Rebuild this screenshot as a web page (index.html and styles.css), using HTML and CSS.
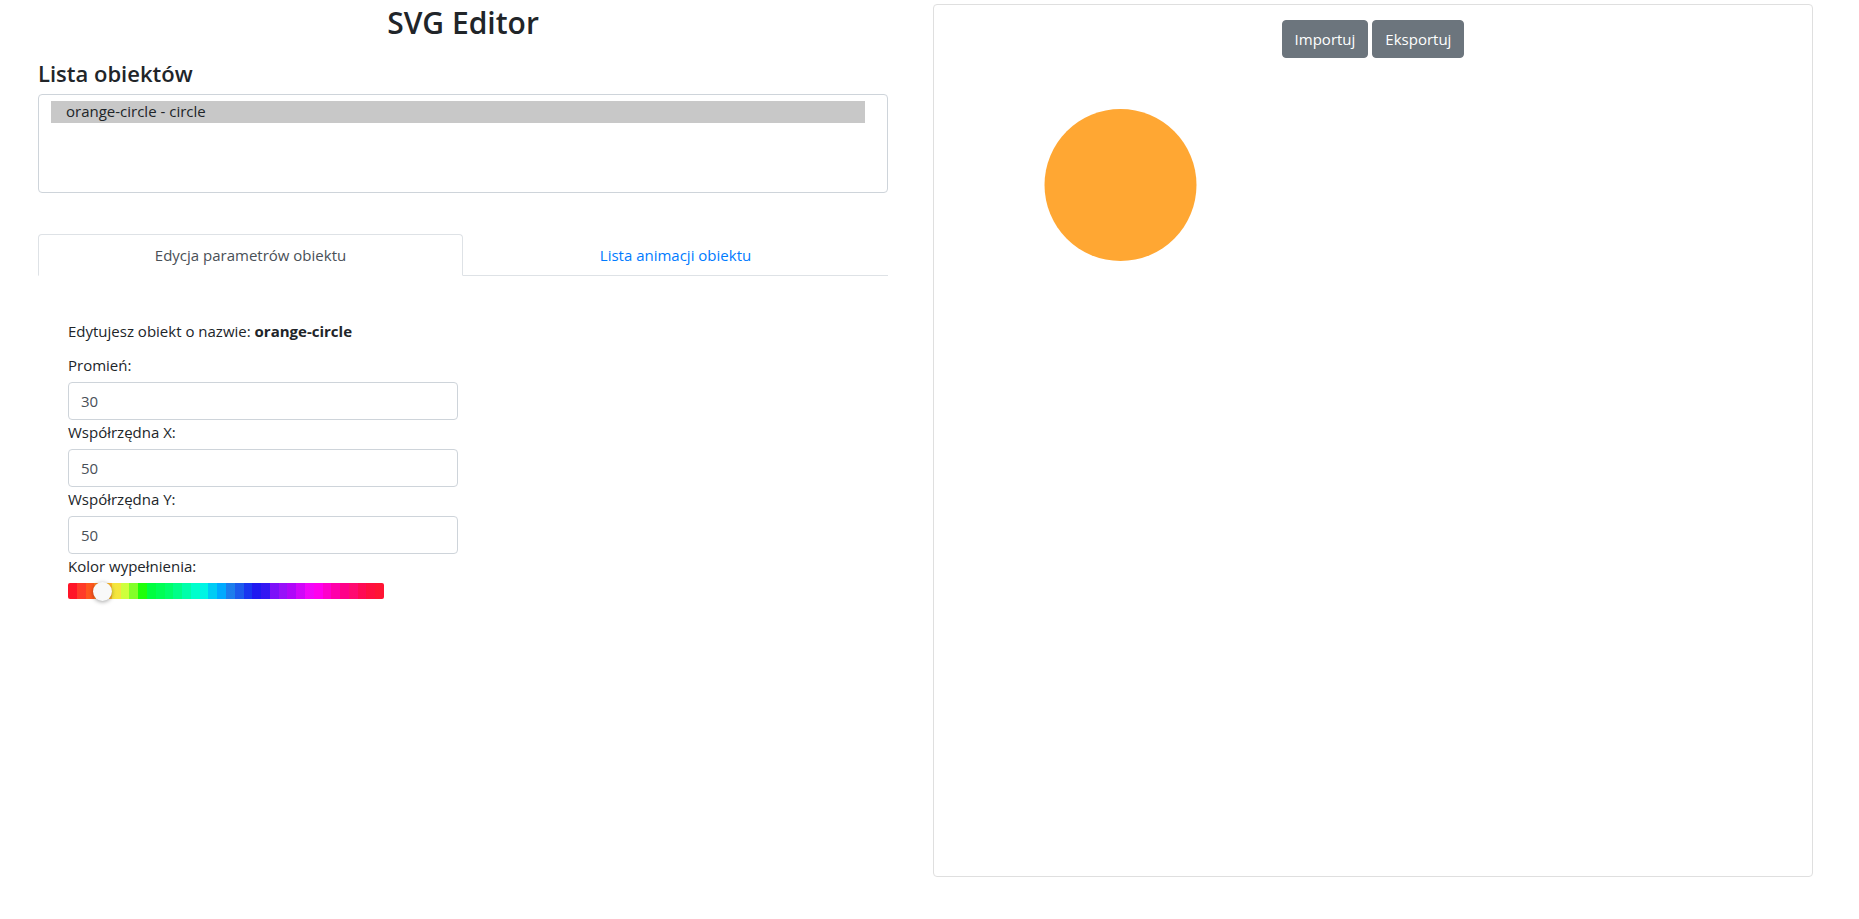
FILE: index.html
```html
<!DOCTYPE html>
<html lang="pl">
<head>
<meta charset="utf-8">
<title>SVG Editor</title>
<link rel="stylesheet" href="styles.css">
</head>
<body>
<div class="page">
  <main class="editor">
    <h1 class="title">SVG Editor</h1>
    <h2 class="section-title">Lista obiektów</h2>
    <div class="object-list" role="listbox">
      <div class="object-option selected" role="option">orange-circle - circle</div>
    </div>
    <nav class="tabs">
      <div class="tab active">Edycja parametrów obiektu</div>
      <div class="tab">Lista animacji obiektu</div>
    </nav>
    <div class="tab-pane">
      <p class="info">Edytujesz obiekt o nazwie: <strong>orange-circle</strong></p>
      <label class="field-label" for="r">Promień:</label>
      <input class="field" id="r" type="text" value="30">
      <label class="field-label" for="x">Współrzędna X:</label>
      <input class="field" id="x" type="text" value="50">
      <label class="field-label" for="y">Współrzędna Y:</label>
      <input class="field" id="y" type="text" value="50">
      <label class="field-label">Kolor wypełnienia:</label>
      <div class="hue-slider"><span class="hue-thumb"></span></div>
    </div>
  </main>
  <section class="canvas-card">
    <div class="toolbar">
      <button class="btn" type="button">Importuj</button>
      <button class="btn" type="button">Eksportuj</button>
    </div>
    <svg class="canvas" xmlns="http://www.w3.org/2000/svg">
      <circle cx="186.5" cy="127" r="76" fill="#ffa733"/>
    </svg>
  </section>
</div>
</body>
</html>
```

FILE: styles.css
```css
html, body {
  margin: 0;
  padding: 0;
  background: #fff;
}

body {
  font-family: "Open Sans", "Noto Sans", sans-serif;
  font-size: 15px;
  line-height: 1.5;
  color: #212529;
}

.page {
  display: flex;
  align-items: flex-start;
}

.editor {
  flex: none;
  width: 850px;
  margin-left: 38px;
}

.title {
  margin: 4px 0 0;
  font-size: 30px;
  font-weight: 600;
  line-height: 38.4px;
  text-align: center;
}

.section-title {
  margin: 17px 0 6px;
  font-size: 22px;
  font-weight: 600;
  line-height: 28.8px;
}

.object-list {
  box-sizing: border-box;
  height: 99px;
  padding: 6px 22px 0 12px;
  border: 1px solid #ced4da;
  border-radius: 4px;
}

.object-option {
  box-sizing: border-box;
  height: 22px;
  padding-left: 15px;
  line-height: 20px;
  color: #212529;
}

.object-option.selected {
  background: #c8c8c8;
}

.tabs {
  display: flex;
  margin-top: 41px;
  border-bottom: 1px solid #dee2e6;
}

.tab {
  flex: 1 1 0;
  margin-bottom: -1px;
  padding: 8px 16px;
  border: 1px solid transparent;
  border-top-left-radius: 4px;
  border-top-right-radius: 4px;
  line-height: 24px;
  text-align: center;
  color: #007bff;
}

.tab.active {
  color: #495057;
  background: #fff;
  border-color: #dee2e6 #dee2e6 #fff;
}

.tab-pane {
  padding: 43px 0 0 30px;
}

.info {
  margin: 0 0 10px;
  line-height: 24px;
}

.info strong {
  font-weight: 700;
}

.field-label {
  display: block;
  margin-bottom: 5px;
  line-height: 24px;
}

.field {
  display: block;
  box-sizing: border-box;
  width: 390px;
  height: 38px;
  margin: 0;
  padding: 6px 12px;
  border: 1px solid #ced4da;
  border-radius: 4px;
  font: inherit;
  line-height: 24px;
  color: #495057;
  background: #fff;
}

.hue-slider {
  position: relative;
  width: 316px;
  height: 16px;
  border-radius: 2px;
  background: linear-gradient(to right,
    hsl(355 100% 54%) 0% 2.78%,
    hsl(5 100% 58%) 2.78% 5.56%,
    hsl(15 100% 56%) 5.56% 8.33%,
    hsl(25 100% 56%) 8.33% 11.11%,
    hsl(40 100% 58%) 11.11% 13.89%,
    hsl(55 90% 60%) 13.89% 16.67%,
    hsl(75 100% 62%) 16.67% 19.44%,
    hsl(95 100% 58%) 19.44% 22.22%,
    hsl(115 100% 52%) 22.22% 25%,
    hsl(135 100% 50%) 25% 27.78%,
    hsl(140 100% 50%) 27.78% 30.56%,
    hsl(145 100% 50%) 30.56% 33.33%,
    hsl(152 100% 50%) 33.33% 36.11%,
    hsl(160 100% 50%) 36.11% 38.89%,
    hsl(168 100% 50%) 38.89% 41.67%,
    hsl(176 100% 48%) 41.67% 44.44%,
    hsl(190 100% 48%) 44.44% 47.22%,
    hsl(200 100% 50%) 47.22% 50%,
    hsl(212 85% 52%) 50% 52.78%,
    hsl(222 85% 52%) 52.78% 55.56%,
    hsl(232 88% 52%) 55.56% 58.33%,
    hsl(242 88% 52%) 58.33% 61.11%,
    hsl(248 90% 52%) 61.11% 63.89%,
    hsl(268 95% 52%) 63.89% 66.67%,
    hsl(275 95% 52%) 66.67% 69.44%,
    hsl(282 95% 50%) 69.44% 72.22%,
    hsl(290 95% 50%) 72.22% 75%,
    hsl(298 95% 50%) 75% 77.78%,
    hsl(304 100% 50%) 77.78% 80.56%,
    hsl(312 100% 50%) 80.56% 83.33%,
    hsl(320 100% 50%) 83.33% 86.11%,
    hsl(328 100% 50%) 86.11% 88.89%,
    hsl(335 100% 52%) 88.89% 91.67%,
    hsl(342 100% 52%) 91.67% 94.44%,
    hsl(348 100% 53%) 94.44% 97.22%,
    hsl(352 100% 54%) 97.22% 100%);
}

.hue-thumb {
  position: absolute;
  left: 24.5px;
  top: -1.5px;
  width: 19px;
  height: 19px;
  border-radius: 50%;
  background: #f8f9f9;
  box-shadow: 0 1px 4px rgba(0, 0, 0, 0.37);
}

.canvas-card {
  flex: none;
  box-sizing: border-box;
  display: flex;
  flex-direction: column;
  width: 880px;
  height: 873px;
  margin: 4px 0 0 45px;
  border: 1px solid #dfdfdf;
  border-radius: 4px;
  background: #fff;
}

.toolbar {
  display: flex;
  justify-content: center;
  gap: 4px;
  padding-top: 15px;
}

.btn {
  margin: 0;
  padding: 6px 12px;
  border: 1px solid #6c757d;
  border-radius: 4px;
  background: #6c757d;
  color: #fff;
  font: inherit;
  line-height: 24px;
  cursor: pointer;
}

.canvas {
  display: block;
  flex: 1 1 auto;
  width: 100%;
}
```
